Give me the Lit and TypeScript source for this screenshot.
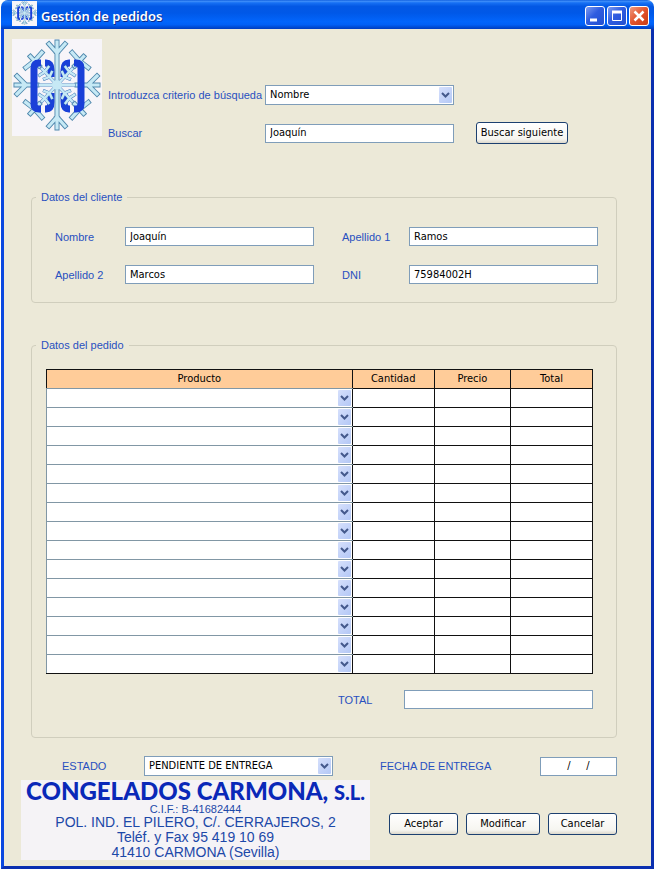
import { LitElement, html, css, svg } from "lit";
import { customElement } from "lit/decorators.js";

const outerArm = "M0 -6V-43M0 -32L-8 -41M0 -32L8 -41";
const sideArm = "M0 -20V-41M0 -31L-9 -40M0 -31L9 -40";
const cornerArm = "M0 -26V-39M0 -33L-11 -34M0 -33L11 -34";
const outer = [
  { d: outerArm, angle: 0 },
  { d: outerArm, angle: 180 },
  { d: sideArm, angle: 90 },
  { d: sideArm, angle: 270 },
  { d: cornerArm, angle: 43 },
  { d: cornerArm, angle: 137 },
  { d: cornerArm, angle: 223 },
  { d: cornerArm, angle: 317 },
];
const innerCorner = "M0 0V-22M0 -11L-5 -13M0 -11L5 -13M0 -18L-6 -19M0 -18L6 -19";
const inner = [
  { d: innerCorner, angle: 43 },
  { d: innerCorner, angle: 137 },
  { d: innerCorner, angle: 223 },
  { d: innerCorner, angle: 317 },
  { d: "M0 0V-17", angle: 90 },
  { d: "M0 0V-17", angle: 270 },
];

@customElement("snow-logo")
export class SnowLogo extends LitElement {
  static styles = css`
    :host { display: block; background: #f7f5f9; }
    svg { display: block; width: 100%; height: 100%; }
    path { fill: none; stroke-linecap: square; }
    .bracket { stroke: #1a40d8; stroke-width: 7; stroke-linecap: butt; }
    .edge { stroke: #4f88ad; stroke-width: 5; }
    .ice { stroke: #c6e9f5; stroke-width: 3.2; }
    .fine-edge { stroke: #3c74b8; stroke-width: 3.2; }
    .fine-ice { stroke: #c6e9f5; stroke-width: 2.4; }
    .core { fill: #c6e9f5; }
  `;

  render() {
    const arms = (list: { d: string; angle: number }[], cls: string) =>
      list.map((a) => svg`<path class=${cls} d=${a.d} transform="rotate(${a.angle})"></path>`);
    return html`
      <svg viewBox="0 0 90 97" preserveAspectRatio="none" aria-hidden="true">
        <g transform="translate(45 46)">${arms(outer, "edge")}${arms(outer, "ice")}</g>
        <path class="bracket" d="M29 24H27Q22 24 22 29V65Q22 70 27 70H29M33 24H34Q39 24 39 31V38M39 54V63Q39 70 34 70H33M58 24H57Q52 24 52 31V38M52 54V63Q52 70 57 70H58M62 24H64Q69 24 69 29V65Q69 70 64 70H62"></path>
        <g transform="translate(45 46)">${arms(inner, "fine-edge")}${arms(inner, "fine-ice")}<circle class="core" r="5"></circle></g>
      </svg>
    `;
  }
}

@customElement("combo-box")
export class ComboBox extends LitElement {
  static formAssociated = true;
  static shadowRootOptions = { ...LitElement.shadowRootOptions, delegatesFocus: true };
  static properties = {
    label: { type: String },
    value: { type: String },
    plain: { type: Boolean, reflect: true },
  };
  declare label: string;
  declare value: string;
  declare plain: boolean;

  constructor() {
    super();
    this.label = "";
    this.value = "";
    this.plain = false;
  }

  static styles = css`
    :host {
      display: block;
      position: relative;
      box-sizing: border-box;
      height: 20px;
      border: 1px solid #7f9db9;
      background: #fff;
    }
    :host([plain]) { height: 18px; border: 0; }
    select {
      appearance: none;
      display: block;
      box-sizing: border-box;
      width: 100%;
      height: 100%;
      border: 0;
      margin: 0;
      padding: 0 18px 0 4px;
      background: transparent;
      color: #000;
      font: 11px/16px "DejaVu Sans Condensed", "Noto Sans", sans-serif;
    }
    .arrow {
      position: absolute;
      top: 1px;
      right: 1px;
      bottom: 1px;
      width: 13px;
      display: grid;
      place-items: center;
      background: linear-gradient(135deg, #d6e0fc, #b4c8f6);
      border-radius: 1px;
      pointer-events: none;
    }
    svg { display: block; width: 9px; height: 6px; }
    path { fill: none; stroke: #44598c; stroke-width: 2; }
  `;

  render() {
    return html`
      <select aria-label=${this.label}><option>${this.value}</option></select>
      <span class="arrow"><svg viewBox="0 0 9 6"><path d="M1 1L4.500 4.500L8 1"></path></svg></span>
    `;
  }
}

@customElement("app-root")
export class AppRoot extends LitElement {
  static styles = css`
    :host {
      display: block;
      box-sizing: border-box;
      padding: 0 1px 1px;
      background: #fff;
      color: #000;
      font: 11px/14px "DejaVu Sans Condensed", "Noto Sans", sans-serif;
    }
    .window {
      border-radius: 7px 7px 0 0;
      overflow: hidden;
      background: #ece9d8;
    }
    .titlebar {
      display: flex;
      align-items: center;
      height: 29px;
      padding: 0 5px 0 11px;
      background: linear-gradient(#1463e0, #3a8bf8 5%, #1670f4 10%, #0358e4 22%, #0058e8 45%, #0265fc 75%, #0160f6 85%, #0046cc 96%, #003cc0);
    }
    .app-icon { width: 25px; height: 25px; margin-bottom: 3px; }
    h1 {
      flex: 1;
      margin: 2px 0 0 4px;
      color: #fff;
      font: 600 13px/18px "Noto Sans", sans-serif;
      text-shadow: 1px 1px 0 #0a2c8c;
    }
    .caption {
      display: block;
      width: 20px;
      height: 20px;
      margin: 3px 0 0 2px;
      padding: 0;
      box-sizing: border-box;
      border: 1px solid #fff;
      border-radius: 3px;
      background: linear-gradient(135deg, #7d9bf0, #2e5ce0 45%, #2350d0);
    }
    .caption.close { background: linear-gradient(135deg, #f09a80, #e2532c 50%, #c83c14); }
    .caption svg { display: block; width: 18px; height: 18px; }
    .client {
      border: 3px solid #0a3cc8;
      border-color: #0a3cc8 #0a2fb0 #0a2fb0 #0a48e0;
      border-top: 0;
      padding: 10px 34px 6px 8px;
    }
    label, legend {
      color: #2850c0;
      font: 11px/14px "Liberation Sans", sans-serif;
    }
    input {
      display: block;
      box-sizing: border-box;
      width: 100%;
      min-width: 0;
      height: 19px;
      margin: 0;
      padding: 0 4px 1px;
      border: 1px solid #7f9db9;
      border-radius: 0;
      background: #fff;
      color: #000;
      font: 11px/16px "DejaVu Sans Condensed", "Noto Sans", sans-serif;
    }
    .btn {
      box-sizing: border-box;
      height: 22px;
      margin: 0;
      padding: 0 0 1px;
      border: 1px solid #1c4070;
      border-radius: 3px;
      background: linear-gradient(#fff, #f6f5f0 80%, #dcd8cc);
      color: #000;
      font: 11px/16px "DejaVu Sans Condensed", "Noto Sans", sans-serif;
      white-space: nowrap;
    }
    .search { display: flex; gap: 6px; }
    .logo { flex: none; width: 90px; height: 97px; }
    .criteria {
      flex: 1;
      display: grid;
      grid-template-columns: 157px minmax(0, 189fr) minmax(92px, 163fr);
      grid-template-rows: 20px 22px;
      row-gap: 17px;
      align-items: center;
      align-content: start;
      padding-top: 46px;
    }
    .criteria .btn { width: 92px; margin-left: 22px; }
    fieldset {
      min-width: 0;
      margin: 0 0 0 19px;
      border: 1px solid #d0cebd;
      border-radius: 4px;
    }
    legend { padding: 0 5px; }
    .customer { margin-top: 46px; padding: 23px 18px 18px 23px; }
    .customer legend { margin-left: -19px; }
    .customer-grid {
      display: grid;
      grid-template-columns: 70px minmax(0, 1fr) 95px minmax(0, 1fr);
      row-gap: 19px;
      align-items: center;
    }
    .second { margin-left: 28px; }
    .order { margin-top: 35px; padding: 17px 23px 28px 14px; }
    .order legend { margin-left: -10px; }
    table {
      width: 100%;
      table-layout: fixed;
      border-collapse: collapse;
      background: #fff;
    }
    th, td { height: 18px; padding: 0; border: 1px solid #111; }
    th {
      background: #ffcc99;
      font: 11px/16px "DejaVu Sans Condensed", "Noto Sans", sans-serif;
    }
    .col-product { width: 56%; }
    .col-amount { width: 15%; }
    .col-price { width: 14%; }
    th.product { border-bottom-color: #8197a5; }
    td.product { border-color: #8197a5 #111 #8197a5 #8197a5; }
    tr:last-child td.product { border-bottom-color: #111; }
    .total {
      display: flex;
      justify-content: flex-end;
      align-items: center;
      margin-top: 16px;
    }
    .total label { width: 66px; }
    .total input { width: 189px; }
    .status {
      display: flex;
      align-items: center;
      margin: 18px 0 0 50px;
    }
    .status .state { width: 82px; }
    .status combo-box { width: 189px; }
    .status .date { flex: 1; margin-left: 47px; }
    .status input { width: 77px; text-align: center; white-space: pre; }
    .footer {
      display: flex;
      justify-content: space-between;
      margin: 4px 0 0 9px;
    }
    .company {
      width: 349px;
      background: #f5f3f6;
      color: #1c48a8;
      font: 14px/15px "Liberation Sans", sans-serif;
      text-align: center;
      white-space: nowrap;
    }
    .company p { margin: 0; }
    .company .name {
      color: #0a28b8;
      font: 900 24px/21px Lato, sans-serif;
    }
    .company .suffix { font-size: 20px; line-height: 1px; }
    .company .tax { margin-top: 2px; font-size: 11px; line-height: 12px; }
    .actions { display: flex; align-items: flex-end; gap: 8px; padding-bottom: 25px; }
    .actions .btn { width: 69px; }
    .actions .wide { width: 74px; }
  `;

  render() {
    const rows = Array.from({ length: 15 }, (_, i) => i + 1);
    return html`
      <div class="window">
        <header class="titlebar">
          <snow-logo class="app-icon"></snow-logo>
          <h1>Gestión de pedidos</h1>
          <button class="caption" aria-label="Minimizar">
            <svg viewBox="0 0 18 18"><path d="M4 13H11" stroke="#fff" stroke-width="3"></path></svg>
          </button>
          <button class="caption" aria-label="Maximizar">
            <svg viewBox="0 0 18 18"><path d="M4.500 5V13.500H13.500V5" fill="none" stroke="#fff"></path><path d="M4 5H14" stroke="#fff" stroke-width="3"></path></svg>
          </button>
          <button class="caption close" aria-label="Cerrar">
            <svg viewBox="0 0 18 18"><path d="M4.500 4.500L13.500 13.500M13.500 4.500L4.500 13.500" stroke="#fff" stroke-width="2.500"></path></svg>
          </button>
        </header>
        <main class="client">
          <section class="search">
            <snow-logo class="logo"></snow-logo>
            <div class="criteria">
              <label for="criterion">Introduzca criterio de búsqueda</label>
              <combo-box id="criterion" label="Introduzca criterio de búsqueda" value="Nombre"></combo-box>
              <span></span>
              <label for="query">Buscar</label>
              <input id="query" .value=${"Joaquín"} />
              <button class="btn">Buscar siguiente</button>
            </div>
          </section>

          <fieldset class="customer">
            <legend>Datos del cliente</legend>
            <div class="customer-grid">
              <label for="first">Nombre</label>
              <input id="first" .value=${"Joaquín"} />
              <label class="second" for="last1">Apellido 1</label>
              <input id="last1" .value=${"Ramos"} />
              <label for="last2">Apellido 2</label>
              <input id="last2" .value=${"Marcos"} />
              <label class="second" for="dni">DNI</label>
              <input id="dni" .value=${"75984002H"} />
            </div>
          </fieldset>

          <fieldset class="order">
            <legend>Datos del pedido</legend>
            <table>
              <colgroup>
                <col class="col-product" /><col class="col-amount" /><col class="col-price" /><col />
              </colgroup>
              <thead>
                <tr><th class="product">Producto</th><th>Cantidad</th><th>Precio</th><th>Total</th></tr>
              </thead>
              <tbody>
                ${rows.map((n) => html`
                  <tr>
                    <td class="product"><combo-box plain label="Producto ${n}"></combo-box></td>
                    <td></td><td></td><td></td>
                  </tr>
                `)}
              </tbody>
            </table>
            <div class="total">
              <label for="total">TOTAL</label>
              <input id="total" />
            </div>
          </fieldset>

          <div class="status">
            <label class="state" for="state">ESTADO</label>
            <combo-box id="state" label="ESTADO" value="PENDIENTE DE ENTREGA"></combo-box>
            <label class="date" for="date">FECHA DE ENTREGA</label>
            <input id="date" .value=${"/     /"} />
          </div>

          <footer class="footer">
            <div class="company">
              <p class="name">CONGELADOS CARMONA, <span class="suffix">S.L.</span></p>
              <p class="tax">C.I.F.: B-41682444</p>
              <p>POL. IND. EL PILERO, C/. CERRAJEROS, 2</p>
              <p>Teléf. y Fax 95 419 10 69</p>
              <p>41410 CARMONA (Sevilla)</p>
            </div>
            <div class="actions">
              <button class="btn">Aceptar</button>
              <button class="btn wide">Modificar</button>
              <button class="btn">Cancelar</button>
            </div>
          </footer>
        </main>
      </div>
    `;
  }
}
